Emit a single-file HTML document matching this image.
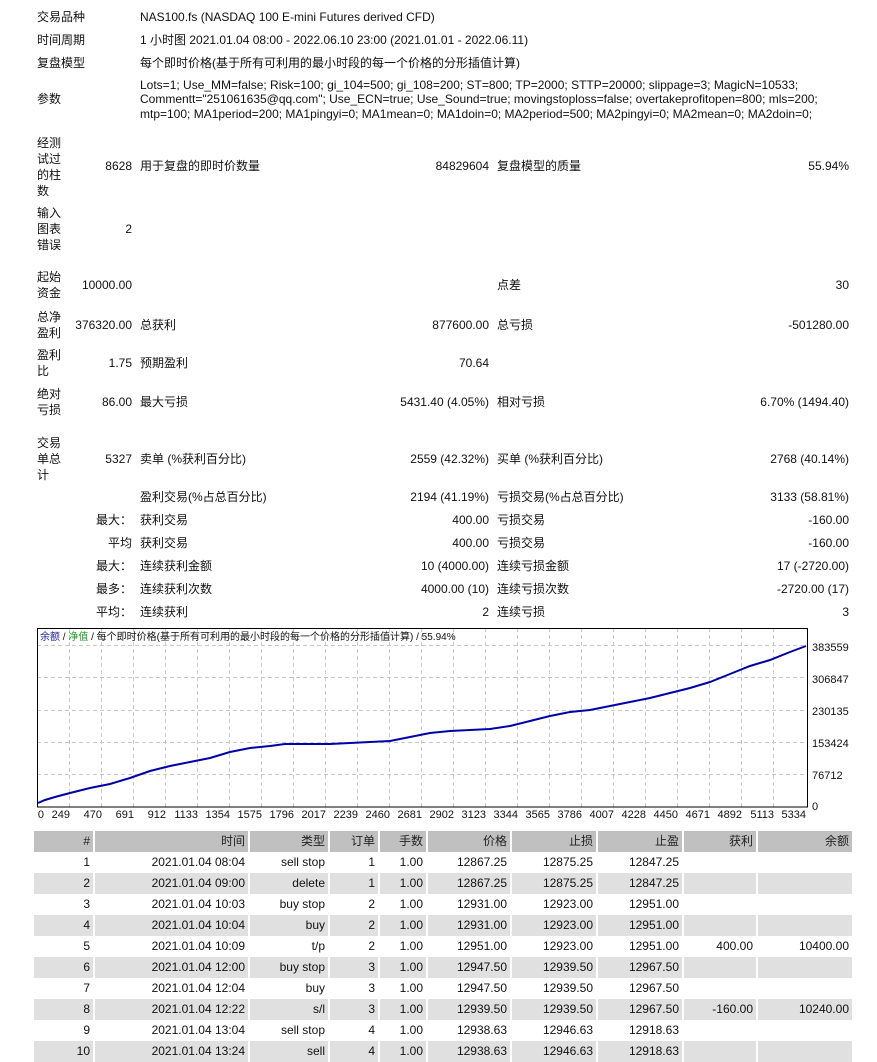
<!DOCTYPE html>
<html><head><meta charset="utf-8">
<style>
html,body{margin:0;padding:0;background:#fff;}
body{width:877px;height:1053px;position:relative;overflow:hidden;font-family:"Liberation Sans","Noto Sans CJK SC",sans-serif;font-size:12px;color:#111;}
.t{position:absolute;white-space:nowrap;line-height:15px;}
.r{position:absolute;white-space:nowrap;line-height:15px;text-align:right;}
.lb{position:absolute;left:37px;width:28px;line-height:16px;white-space:normal;word-break:break-all;}
table{position:absolute;left:34px;top:831px;border-collapse:collapse;table-layout:fixed;width:818px;}
td{height:21px;padding:0 3px 0 0;text-align:right;border-right:2px solid #fff;white-space:nowrap;overflow:hidden;box-sizing:border-box;line-height:21px;}
td:last-child{border-right:none;}
tr.h td{background:#c0c0c0;color:#222;}
tr.g td{background:#e0e0e0;}
</style></head><body>

<div class="t" style="left:37px;top:10px">交易品种</div>
<div class="t" style="left:140px;top:10px">NAS100.fs (NASDAQ 100 E-mini Futures derived CFD)</div>
<div class="t" style="left:37px;top:33px">时间周期</div>
<div class="t" style="left:140px;top:33px">1 小时图 2021.01.04 08:00 - 2022.06.10 23:00 (2021.01.01 - 2022.06.11)</div>
<div class="t" style="left:37px;top:56px">复盘模型</div>
<div class="t" style="left:140px;top:56px">每个即时价格(基于所有可利用的最小时段的每一个价格的分形插值计算)</div>
<div class="t" style="left:37px;top:92px">参数</div>
<div class="t" style="left:140px;top:78px">Lots=1; Use_MM=false; Risk=100; gi_104=500; gi_108=200; ST=800; TP=2000; STTP=20000; slippage=3; MagicN=10533;</div>
<div class="t" style="left:140px;top:92px">Commentt="251061635@qq.com"; Use_ECN=true; Use_Sound=true; movingstoploss=false; overtakeprofitopen=800; mls=200;</div>
<div class="t" style="left:140px;top:107px">mtp=100; MA1period=200; MA1pingyi=0; MA1mean=0; MA1doin=0; MA2period=500; MA2pingyi=0; MA2mean=0; MA2doin=0;</div>

<div class="lb" style="top:135px">经测试过的柱数</div>
<div class="r" style="right:745px;top:159px">8628</div>
<div class="t" style="left:140px;top:159px">用于复盘的即时价数量</div>
<div class="r" style="right:388px;top:159px">84829604</div>
<div class="t" style="left:497px;top:159px">复盘模型的质量</div>
<div class="r" style="right:28px;top:159px">55.94%</div>

<div class="lb" style="top:205px">输入图表错误</div>
<div class="r" style="right:745px;top:222px">2</div>

<div class="lb" style="top:269px">起始资金</div>
<div class="r" style="right:745px;top:278px">10000.00</div>
<div class="t" style="left:497px;top:278px">点差</div>
<div class="r" style="right:28px;top:278px">30</div>

<div class="lb" style="top:309px">总净盈利</div>
<div class="r" style="right:745px;top:318px">376320.00</div>
<div class="t" style="left:140px;top:318px">总获利</div>
<div class="r" style="right:388px;top:318px">877600.00</div>
<div class="t" style="left:497px;top:318px">总亏损</div>
<div class="r" style="right:28px;top:318px">-501280.00</div>

<div class="lb" style="top:347px">盈利比</div>
<div class="r" style="right:745px;top:356px">1.75</div>
<div class="t" style="left:140px;top:356px">预期盈利</div>
<div class="r" style="right:388px;top:356px">70.64</div>

<div class="lb" style="top:386px">绝对亏损</div>
<div class="r" style="right:745px;top:395px">86.00</div>
<div class="t" style="left:140px;top:395px">最大亏损</div>
<div class="r" style="right:388px;top:395px">5431.40 (4.05%)</div>
<div class="t" style="left:497px;top:395px">相对亏损</div>
<div class="r" style="right:28px;top:395px">6.70% (1494.40)</div>

<div class="lb" style="top:435px">交易单总计</div>
<div class="r" style="right:745px;top:452px">5327</div>
<div class="t" style="left:140px;top:452px">卖单 (%获利百分比)</div>
<div class="r" style="right:388px;top:452px">2559 (42.32%)</div>
<div class="t" style="left:497px;top:452px">买单 (%获利百分比)</div>
<div class="r" style="right:28px;top:452px">2768 (40.14%)</div>

<div class="t" style="left:140px;top:490px">盈利交易(%占总百分比)</div>
<div class="r" style="right:388px;top:490px">2194 (41.19%)</div>
<div class="t" style="left:497px;top:490px">亏损交易(%占总百分比)</div>
<div class="r" style="right:28px;top:490px">3133 (58.81%)</div>

<div class="r" style="right:745px;top:513px">最大：</div>
<div class="t" style="left:140px;top:513px">获利交易</div>
<div class="r" style="right:388px;top:513px">400.00</div>
<div class="t" style="left:497px;top:513px">亏损交易</div>
<div class="r" style="right:28px;top:513px">-160.00</div>

<div class="r" style="right:745px;top:536px">平均</div>
<div class="t" style="left:140px;top:536px">获利交易</div>
<div class="r" style="right:388px;top:536px">400.00</div>
<div class="t" style="left:497px;top:536px">亏损交易</div>
<div class="r" style="right:28px;top:536px">-160.00</div>

<div class="r" style="right:745px;top:559px">最大：</div>
<div class="t" style="left:140px;top:559px">连续获利金额</div>
<div class="r" style="right:388px;top:559px">10 (4000.00)</div>
<div class="t" style="left:497px;top:559px">连续亏损金额</div>
<div class="r" style="right:28px;top:559px">17 (-2720.00)</div>

<div class="r" style="right:745px;top:582px">最多：</div>
<div class="t" style="left:140px;top:582px">连续获利次数</div>
<div class="r" style="right:388px;top:582px">4000.00 (10)</div>
<div class="t" style="left:497px;top:582px">连续亏损次数</div>
<div class="r" style="right:28px;top:582px">-2720.00 (17)</div>

<div class="r" style="right:745px;top:605px">平均：</div>
<div class="t" style="left:140px;top:605px">连续获利</div>
<div class="r" style="right:388px;top:605px">2</div>
<div class="t" style="left:497px;top:605px">连续亏损</div>
<div class="r" style="right:28px;top:605px">3</div>

<svg style="position:absolute;left:0;top:0" width="877" height="830" xmlns="http://www.w3.org/2000/svg">
<g stroke="#c8c8c8" stroke-width="1" stroke-dasharray="4,3">
<line x1="37" y1="645.5" x2="808" y2="645.5"/>
<line x1="37" y1="677.5" x2="808" y2="677.5"/>
<line x1="37" y1="710.5" x2="808" y2="710.5"/>
<line x1="37" y1="742.5" x2="808" y2="742.5"/>
<line x1="37" y1="774.5" x2="808" y2="774.5"/>
<line x1="69.5" y1="628" x2="69.5" y2="807"/><line x1="101.5" y1="628" x2="101.5" y2="807"/><line x1="133.5" y1="628" x2="133.5" y2="807"/><line x1="165.5" y1="628" x2="165.5" y2="807"/><line x1="197.5" y1="628" x2="197.5" y2="807"/><line x1="229.5" y1="628" x2="229.5" y2="807"/><line x1="261.5" y1="628" x2="261.5" y2="807"/><line x1="293.5" y1="628" x2="293.5" y2="807"/><line x1="325.5" y1="628" x2="325.5" y2="807"/><line x1="357.5" y1="628" x2="357.5" y2="807"/><line x1="389.5" y1="628" x2="389.5" y2="807"/><line x1="421.5" y1="628" x2="421.5" y2="807"/><line x1="453.5" y1="628" x2="453.5" y2="807"/><line x1="485.5" y1="628" x2="485.5" y2="807"/><line x1="517.5" y1="628" x2="517.5" y2="807"/><line x1="549.5" y1="628" x2="549.5" y2="807"/><line x1="581.5" y1="628" x2="581.5" y2="807"/><line x1="613.5" y1="628" x2="613.5" y2="807"/><line x1="645.5" y1="628" x2="645.5" y2="807"/><line x1="677.5" y1="628" x2="677.5" y2="807"/><line x1="709.5" y1="628" x2="709.5" y2="807"/><line x1="741.5" y1="628" x2="741.5" y2="807"/><line x1="773.5" y1="628" x2="773.5" y2="807"/>
</g>
<rect x="37.5" y="628.5" width="770" height="178.5" fill="none" stroke="#000" stroke-width="1"/>
<polyline fill="none" stroke="#0000a8" stroke-width="2" points="38,803 45,800 55,797 70,793 90,788 110,784 130,778 150,771 170,766 190,762 210,758 230,752 250,748 270,746 285,744 310,744 330,744 350,743 370,742 390,741 410,737 430,733 450,731 470,730 490,729 510,726 530,721 550,716 570,712 590,710 610,706 630,702 650,698 670,693 690,688 710,682 730,674 750,666 770,660 790,652 806,646"/>
<g font-family="Liberation Sans, Noto Sans CJK SC, sans-serif" font-size="10" fill="#111">
<text x="40" y="640"><tspan fill="#1a1aa0">余额</tspan> / <tspan fill="#1a9a1a">净值</tspan> / 每个即时价格(基于所有可利用的最小时段的每一个价格的分形插值计算) / 55.94%</text>
</g>
<g font-family="Liberation Sans, sans-serif" font-size="11" fill="#111">
<text x="812" y="651">383559</text><text x="812" y="683">306847</text><text x="812" y="715">230135</text><text x="812" y="747">153424</text><text x="812" y="779">76712</text><text x="812" y="810">0</text>
</g>
<g font-family="Liberation Sans, sans-serif" font-size="11" fill="#111" text-anchor="end">
<text x="44" y="818">0</text><text x="70" y="818">249</text><text x="102" y="818">470</text><text x="134" y="818">691</text><text x="166" y="818">912</text><text x="198" y="818">1133</text><text x="230" y="818">1354</text><text x="262" y="818">1575</text><text x="294" y="818">1796</text><text x="326" y="818">2017</text><text x="358" y="818">2239</text><text x="390" y="818">2460</text><text x="422" y="818">2681</text><text x="454" y="818">2902</text><text x="486" y="818">3123</text><text x="518" y="818">3344</text><text x="550" y="818">3565</text><text x="582" y="818">3786</text><text x="614" y="818">4007</text><text x="646" y="818">4228</text><text x="678" y="818">4450</text><text x="710" y="818">4671</text><text x="742" y="818">4892</text><text x="774" y="818">5113</text><text x="806" y="818">5334</text>
</g>
</svg>

<table>
<colgroup><col style="width:60px"><col style="width:155px"><col style="width:80px"><col style="width:50px"><col style="width:48px"><col style="width:84px"><col style="width:86px"><col style="width:86px"><col style="width:74px"><col style="width:95px"></colgroup>
<tr class="h"><td>#</td><td>时间</td><td>类型</td><td>订单</td><td>手数</td><td>价格</td><td>止损</td><td>止盈</td><td>获利</td><td>余额</td></tr>
<tr><td>1</td><td>2021.01.04 08:04</td><td>sell stop</td><td>1</td><td>1.00</td><td>12867.25</td><td>12875.25</td><td>12847.25</td><td></td><td></td></tr>
<tr class="g"><td>2</td><td>2021.01.04 09:00</td><td>delete</td><td>1</td><td>1.00</td><td>12867.25</td><td>12875.25</td><td>12847.25</td><td></td><td></td></tr>
<tr><td>3</td><td>2021.01.04 10:03</td><td>buy stop</td><td>2</td><td>1.00</td><td>12931.00</td><td>12923.00</td><td>12951.00</td><td></td><td></td></tr>
<tr class="g"><td>4</td><td>2021.01.04 10:04</td><td>buy</td><td>2</td><td>1.00</td><td>12931.00</td><td>12923.00</td><td>12951.00</td><td></td><td></td></tr>
<tr><td>5</td><td>2021.01.04 10:09</td><td>t/p</td><td>2</td><td>1.00</td><td>12951.00</td><td>12923.00</td><td>12951.00</td><td>400.00</td><td>10400.00</td></tr>
<tr class="g"><td>6</td><td>2021.01.04 12:00</td><td>buy stop</td><td>3</td><td>1.00</td><td>12947.50</td><td>12939.50</td><td>12967.50</td><td></td><td></td></tr>
<tr><td>7</td><td>2021.01.04 12:04</td><td>buy</td><td>3</td><td>1.00</td><td>12947.50</td><td>12939.50</td><td>12967.50</td><td></td><td></td></tr>
<tr class="g"><td>8</td><td>2021.01.04 12:22</td><td>s/l</td><td>3</td><td>1.00</td><td>12939.50</td><td>12939.50</td><td>12967.50</td><td>-160.00</td><td>10240.00</td></tr>
<tr><td>9</td><td>2021.01.04 13:04</td><td>sell stop</td><td>4</td><td>1.00</td><td>12938.63</td><td>12946.63</td><td>12918.63</td><td></td><td></td></tr>
<tr class="g"><td>10</td><td>2021.01.04 13:24</td><td>sell</td><td>4</td><td>1.00</td><td>12938.63</td><td>12946.63</td><td>12918.63</td><td></td><td></td></tr>
</table>
</body></html>
